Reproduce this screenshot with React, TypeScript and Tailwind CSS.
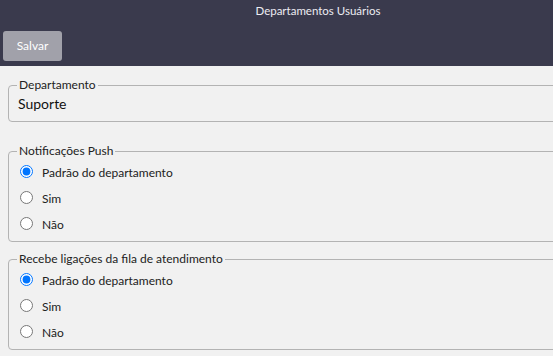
const opcoes = ['Padrão do departamento', 'Sim', 'Não'];

function RadioGroup({ legend, name }: { legend: string; name: string }) {
  return (
    <fieldset className="border border-[#b3b3b3] rounded-[4px] pl-[8px] pb-[5px]">
      <legend className="px-[2px] text-[12px] leading-[14px] text-[#222]">{legend}</legend>
      {opcoes.map((op, i) => (
        <label key={op} className="flex items-center h-[26px] gap-[9px] text-[12px] text-[#222]">
          <input
            type="radio"
            name={name}
            defaultChecked={i === 0}
            className="ml-[3px] w-[13px] h-[13px] m-0"
          />
          <span className="pt-[3px]">{op}</span>
        </label>
      ))}
    </fieldset>
  );
}

export default function App() {
  return (
    <div className="w-full min-h-screen overflow-hidden bg-[#f1f1f1] font-['Lato','Noto_Sans',sans-serif]">
      <div className="w-[636px]">
        <header className="bg-[#3a3a4d] h-[66px] pt-[3px]">
          <h1 className="text-center text-[11.5px] leading-[16px] text-[#ececf2]">Departamentos Usuários</h1>
          <button className="ml-[3px] mt-[12px] w-[59px] h-[30px] rounded-[3px] bg-[#a1a1aa] text-white text-[12px]">
            Salvar
          </button>
        </header>
        <div className="px-[8px]">
          <fieldset className="mt-[12px] border border-[#b3b3b3] rounded-[4px] pl-[8px] pb-[7px]">
            <legend className="px-[2px] text-[12px] leading-[14px] text-[#222]">Departamento</legend>
            <div className="pt-[2px] pl-[1px] text-[14px] leading-[20px] text-[#111]">Suporte</div>
          </fieldset>
          <div className="mt-[22px]">
            <RadioGroup legend="Notificações Push" name="push" />
          </div>
          <div className="mt-[10px]">
            <RadioGroup legend="Recebe ligações da fila de atendimento" name="fila" />
          </div>
        </div>
      </div>
    </div>
  );
}
